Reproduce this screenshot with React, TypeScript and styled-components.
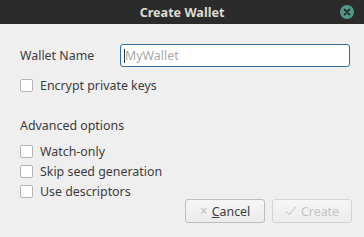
import React from "react";
import styled, { createGlobalStyle } from "styled-components";

const GlobalStyle = createGlobalStyle`
  html, body {
    margin: 0;
    padding: 0;
    background: #efefef;
  }
  * {
    box-sizing: border-box;
  }
`;

const options = ["Watch-only", "Skip seed generation", "Use descriptors"];

function Checkbox({ label }: { label: string }) {
  return (
    <StCheckRow>
      <StBox />
      <span>{label}</span>
    </StCheckRow>
  );
}

export default function App() {
  return (
    <StWindow>
      <GlobalStyle />
      <StTitleBar>
        <StTitle>Create Wallet</StTitle>
        <StClose>
          <svg width="8" height="8" viewBox="0 0 8 8">
            <path d="M1.5 1.5 L6.5 6.5 M6.5 1.5 L1.5 6.5" stroke="#2b2b2b" strokeWidth="1.8" strokeLinecap="round" />
          </svg>
        </StClose>
      </StTitleBar>
      <StBody>
        <StNameRow>
          <StLabel>Wallet Name</StLabel>
          <StInput>
            <StCaret />
            <StPlaceholder>MyWallet</StPlaceholder>
          </StInput>
        </StNameRow>
        <StEncrypt>
          <Checkbox label="Encrypt private keys" />
        </StEncrypt>
        <StSection>Advanced options</StSection>
        <StOptions>
          {options.map((o) => (
            <Checkbox key={o} label={o} />
          ))}
        </StOptions>
        <StButtons>
          <StButton>
            <StIcon>×</StIcon>
            <span>
              <u>C</u>ancel
            </span>
          </StButton>
          <StButton disabled>
            <svg width="12" height="10" viewBox="0 0 12 10">
              <path d="M1 5.5 L4.2 8.5 L11 1" stroke="#cfcfcf" strokeWidth="1.2" fill="none" />
            </svg>
            <span>Create</span>
          </StButton>
        </StButtons>
      </StBody>
    </StWindow>
  );
}

const StWindow = styled.div`
  width: 364px;
  height: 237px;
  display: flex;
  flex-direction: column;
  background: #efefef;
  font-family: "Noto Sans", "DejaVu Sans", sans-serif;
  font-size: 12.4px;
  color: #3c3c3c;
  overflow: hidden;
`;

const StTitleBar = styled.div`
  height: 24px;
  flex: none;
  background: #2b2b2b;
  display: flex;
  align-items: center;
  justify-content: center;
  position: relative;
`;

const StTitle = styled.span`
  color: #dfdbd2;
  font-weight: bold;
  font-size: 12.6px;
`;

const StClose = styled.div`
  position: absolute;
  right: 10px;
  top: 5px;
  width: 14px;
  height: 14px;
  border-radius: 50%;
  background: #4f9a8a;
  display: flex;
  align-items: center;
  justify-content: center;
`;

const StBody = styled.div`
  flex: 1;
  display: flex;
  flex-direction: column;
  padding: 20px 13px 0 20px;
`;

const StNameRow = styled.div`
  display: flex;
  align-items: center;
  height: 23px;
`;

const StLabel = styled.span`
  width: 100px;
`;

const StInput = styled.div`
  flex: 1;
  height: 23px;
  margin-right: 1px;
  background: #fff;
  border: 1px solid #2d6fa3;
  border-radius: 3px;
  display: flex;
  align-items: center;
  padding-left: 3px;
`;

const StCaret = styled.div`
  width: 1px;
  height: 14px;
  background: #333;
`;

const StPlaceholder = styled.span`
  color: #a8a8a8;
`;

const StEncrypt = styled.div`
  margin-top: 11px;
`;

const StCheckRow = styled.div`
  display: flex;
  align-items: center;
  gap: 7px;
  height: 14px;
`;

const StBox = styled.div`
  width: 13px;
  height: 13px;
  background: #fff;
  border: 1px solid #b4b4b4;
  border-radius: 2px;
`;

const StSection = styled.div`
  margin-top: 27px;
  height: 14px;
  line-height: 14px;
`;

const StOptions = styled.div`
  display: flex;
  flex-direction: column;
  gap: 6px;
  margin-top: 11px;
`;

const StButtons = styled.div`
  display: flex;
  justify-content: flex-end;
  gap: 7px;
  margin-top: 1px;
  margin-right: -1px;
`;

const StButton = styled.button`
  width: 80px;
  height: 24px;
  display: flex;
  align-items: center;
  justify-content: center;
  gap: 4px;
  background: linear-gradient(#f6f6f6, #ececec);
  border: 1px solid #bdbdbd;
  border-radius: 3px;
  font: inherit;
  color: ${(p) => (p.disabled ? "#c4c4c4" : "#3c3c3c")};
  border-color: ${(p) => (p.disabled ? "#d4d4d4" : "#bdbdbd")};
  padding: 0;
`;

const StIcon = styled.span`
  color: #bcbcbc;
  font-size: 14px;
  line-height: 1;
`;
